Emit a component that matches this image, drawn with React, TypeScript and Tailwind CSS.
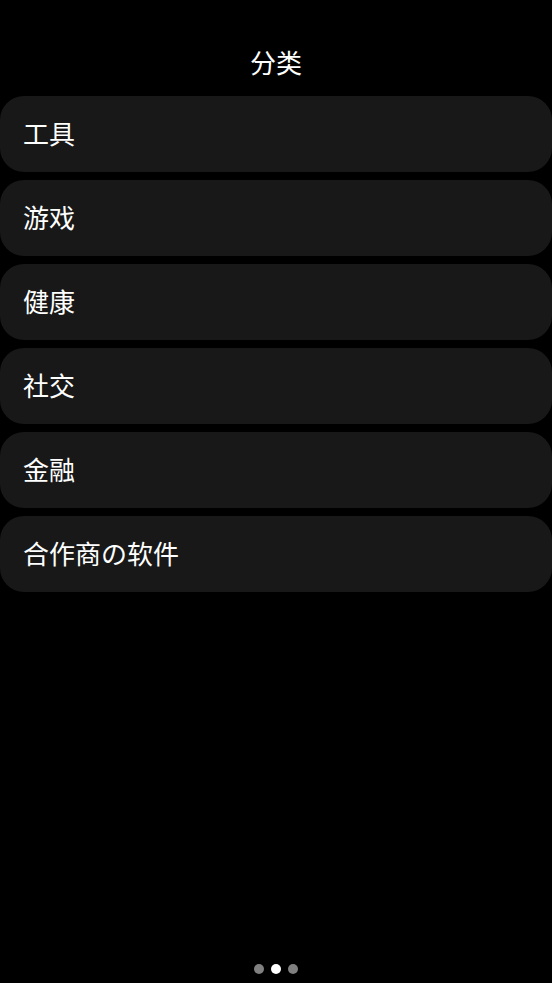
const categories = ["工具", "游戏", "健康", "社交", "金融", "合作商の软件"]

export default function App() {
  return (
    <div
      className="flex min-h-screen flex-col bg-black text-white"
      style={{ fontFamily: '"Noto Sans CJK SC", "Noto Sans", sans-serif' }}
    >
      {/* Header */}
      <div className="pt-[45px] pb-[18px] text-center text-[26px] leading-[33px]">分类</div>

      {/* Category list */}
      <div className="flex flex-col gap-2">
        {categories.map((name) => (
          <div
            key={name}
            className="flex h-[76px] items-center rounded-[24px] bg-[#181818] px-[23px] pb-[3px] text-[26px] leading-[34px]"
          >
            {name}
          </div>
        ))}
      </div>

      {/* Page indicator */}
      <div className="mt-auto flex justify-center gap-[7px] pb-[9px]">
        <span className="h-[10px] w-[10px] rounded-full bg-[#808080]" />
        <span className="h-[10px] w-[10px] rounded-full bg-white" />
        <span className="h-[10px] w-[10px] rounded-full bg-[#808080]" />
      </div>
    </div>
  )
}
